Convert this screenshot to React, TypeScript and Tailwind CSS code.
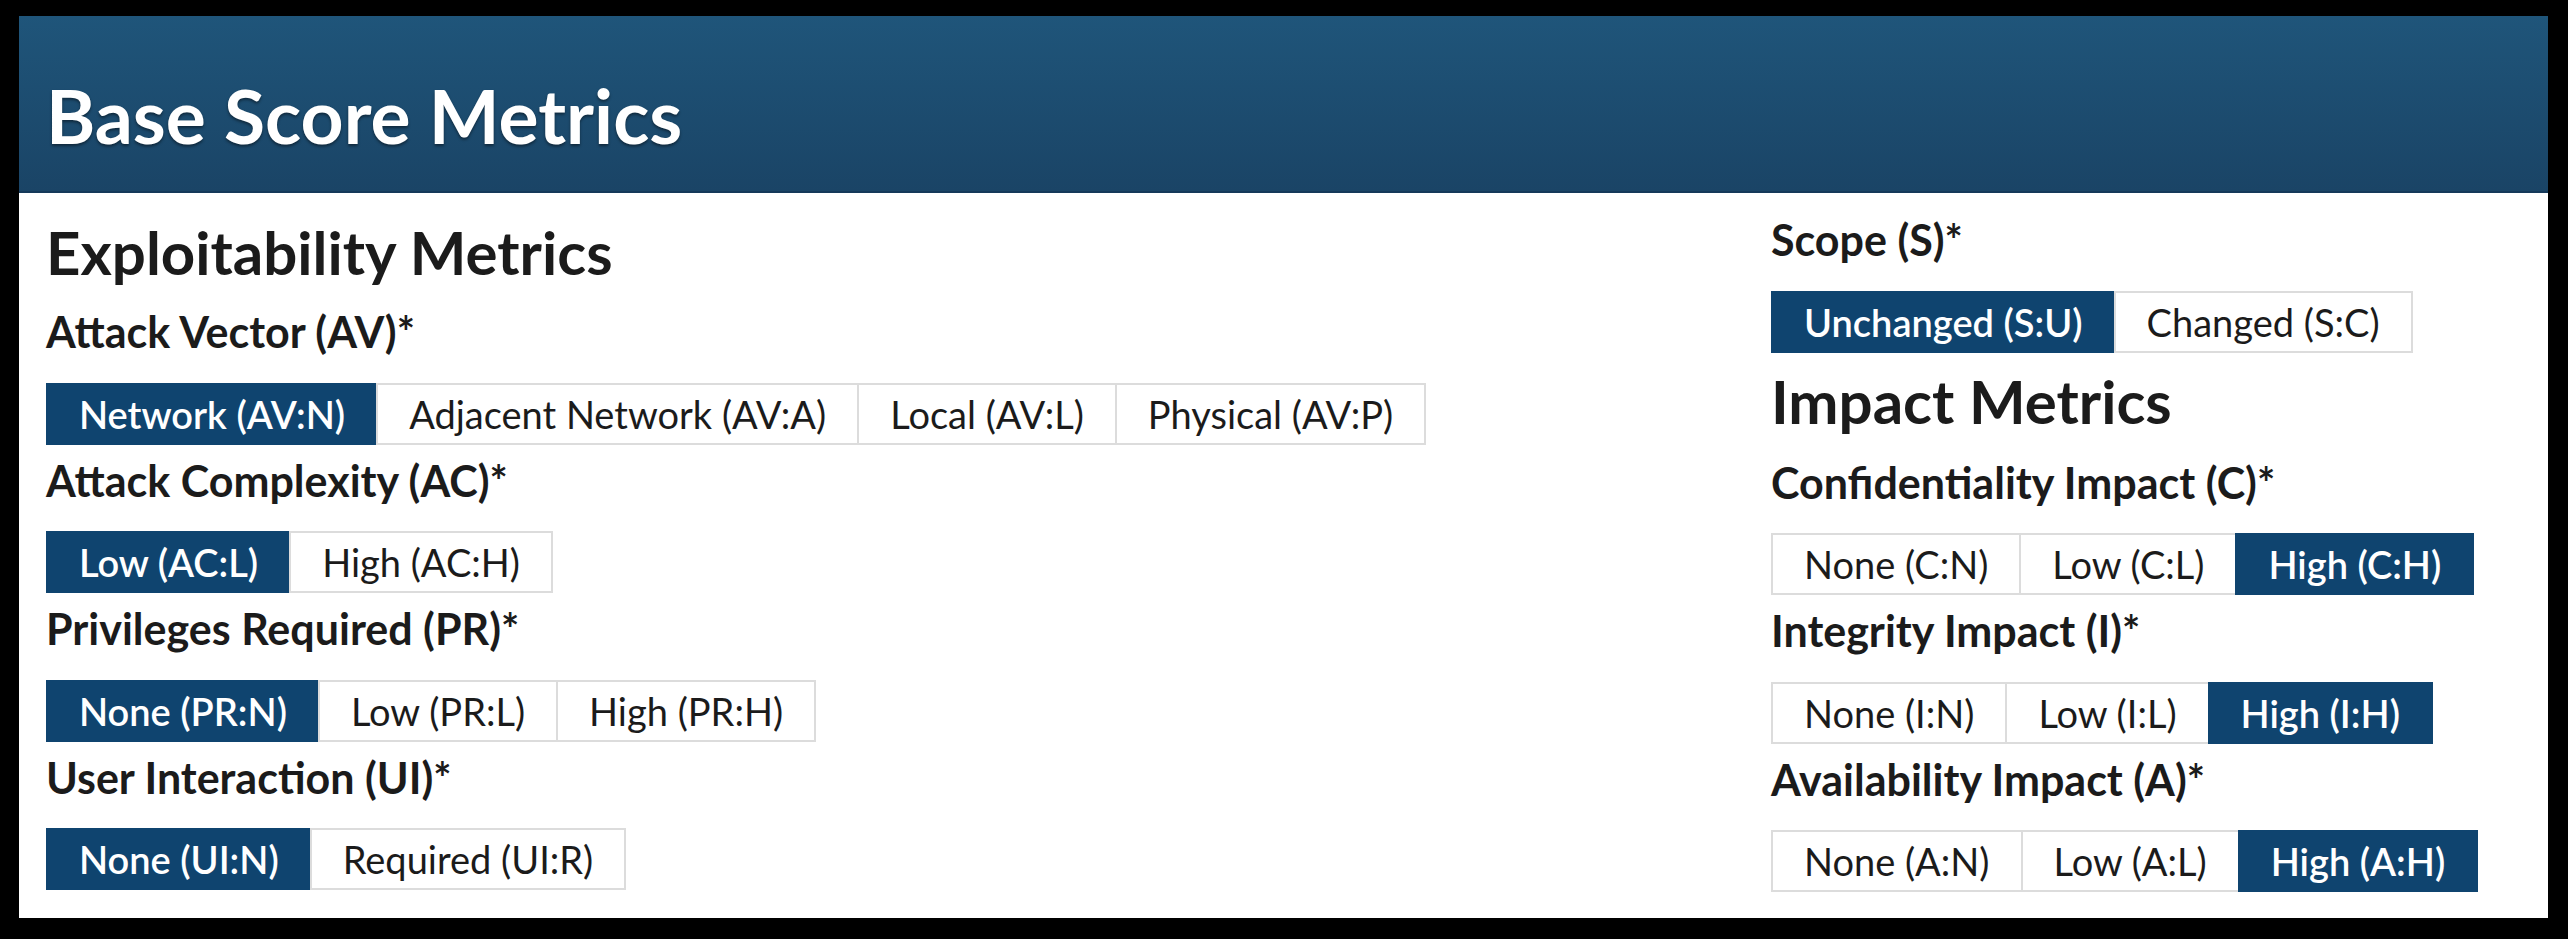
type Metric = {
  label: string;
  options: string[];
  selected: number;
};

const exploitability: Metric[] = [
  {
    label: "Attack Vector (AV)*",
    options: ["Network (AV:N)", "Adjacent Network (AV:A)", "Local (AV:L)", "Physical (AV:P)"],
    selected: 0,
  },
  { label: "Attack Complexity (AC)*", options: ["Low (AC:L)", "High (AC:H)"], selected: 0 },
  {
    label: "Privileges Required (PR)*",
    options: ["None (PR:N)", "Low (PR:L)", "High (PR:H)"],
    selected: 0,
  },
  { label: "User Interaction (UI)*", options: ["None (UI:N)", "Required (UI:R)"], selected: 0 },
];

const scope: Metric = {
  label: "Scope (S)*",
  options: ["Unchanged (S:U)", "Changed (S:C)"],
  selected: 0,
};

const impact: Metric[] = [
  {
    label: "Confidentiality Impact (C)*",
    options: ["None (C:N)", "Low (C:L)", "High (C:H)"],
    selected: 2,
  },
  { label: "Integrity Impact (I)*", options: ["None (I:N)", "Low (I:L)", "High (I:H)"], selected: 2 },
  {
    label: "Availability Impact (A)*",
    options: ["None (A:N)", "Low (A:L)", "High (A:H)"],
    selected: 2,
  },
];

function ButtonGroup({ options, selected }: { options: string[]; selected: number }) {
  return (
    <div className="flex">
      {options.map((opt, i) => (
        <button
          key={opt}
          className={
            i === selected
              ? "h-[62px] px-[31px] border-2 border-[#0f446f] bg-[#0f446f] text-white font-semibold text-[38px] leading-none first:ml-0 -ml-[2px]"
              : "h-[62px] px-[31px] border-2 border-[#dcdcdc] bg-white text-[#1b1b1b] text-[38px] leading-none first:ml-0 -ml-[2px]"
          }
        >
          {opt}
        </button>
      ))}
    </div>
  );
}

function MetricRow({ metric, className }: { metric: Metric; className: string }) {
  return (
    <div className={className}>
      <h4 className="text-[43px] leading-[1.2] font-bold text-[#1b1b1b]">{metric.label}</h4>
      <div className="mt-[25px]">
        <ButtonGroup options={metric.options} selected={metric.selected} />
      </div>
    </div>
  );
}

export default function App() {
  return (
    <div className="w-[2568px] h-[939px] bg-black pl-[19px] pt-[16px] font-['Lato','Noto_Sans',sans-serif]">
      <div className="w-[2529px] h-[902px] bg-white flex flex-col">
        {/* Header bar */}
        <div className="h-[177px] pl-[27px] pt-[54px] bg-gradient-to-b from-[#1f557a] to-[#1a4466] border-b-2 border-[#15395a]">
          <h1 className="text-[75px] leading-[1.2] font-bold text-white [text-shadow:0_2px_3px_rgba(0,0,0,0.45)]">
            Base Score Metrics
          </h1>
        </div>

        <div className="flex">
          {/* Exploitability */}
          <div className="w-[1752px] pl-[27px] pt-[23px]">
            <h3 className="text-[60px] leading-[1.2] font-bold text-[#1b1b1b]">Exploitability Metrics</h3>
            <MetricRow metric={exploitability[0]} className="mt-[18px]" />
            {exploitability.slice(1).map((m) => (
              <MetricRow key={m.label} metric={m} className="mt-[10px]" />
            ))}
          </div>

          {/* Scope + Impact */}
          <div className="pt-[21px]">
            <MetricRow metric={scope} className="" />
            <h3 className="mt-[12px] text-[60px] leading-[1.2] font-bold text-[#1b1b1b]">Impact Metrics</h3>
            <MetricRow metric={impact[0]} className="mt-[20px]" />
            {impact.slice(1).map((m) => (
              <MetricRow key={m.label} metric={m} className="mt-[10px]" />
            ))}
          </div>
        </div>
      </div>
    </div>
  );
}
